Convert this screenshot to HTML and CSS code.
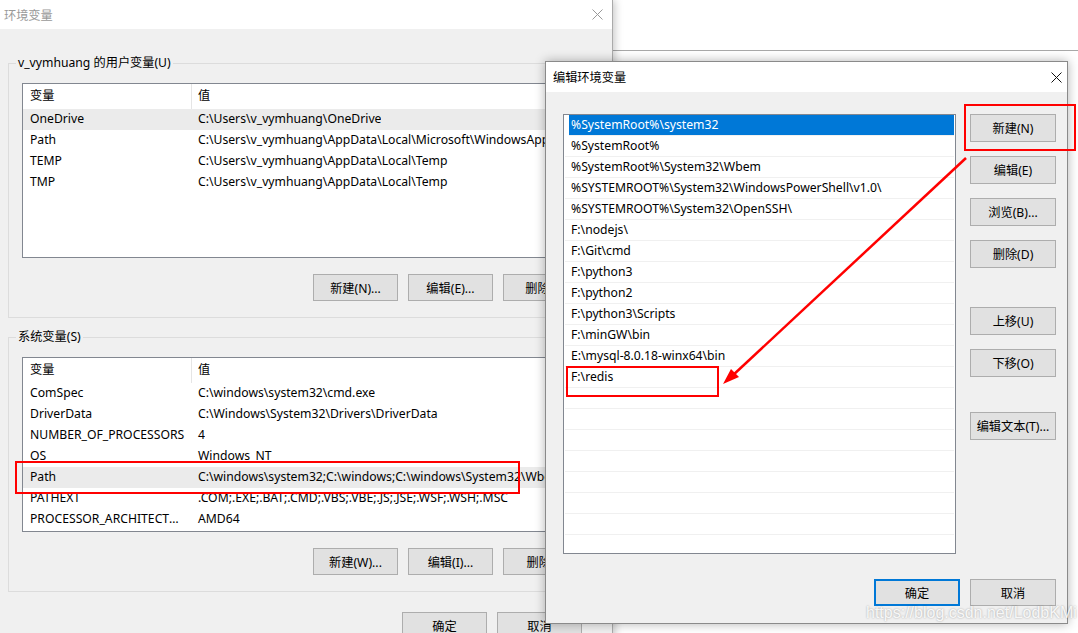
FILE: index.html
```html
<!DOCTYPE html>
<html lang="zh-CN">
<head>
    <meta charset="UTF-8">
    <title>环境变量</title>
    <link rel="stylesheet" href="styles.css">
</head>
<body>
    <div class="desktop">
        <!-- janela de fundo (propriedades do sistema) -->
        <div class="win win-sys"></div>

        <!-- 环境变量 -->
        <div class="win win-env">
            <div class="titlebar inactive">
                <span class="title">环境变量</span>
                <svg class="close" width="11" height="11" viewBox="0 0 11 11"><path d="M0.5 0.5L10.5 10.5M10.5 0.5L0.5 10.5"/></svg>
            </div>
            <div class="win-body">
                <fieldset class="group">
                    <legend>v_vymhuang 的用户变量(U)</legend>
                    <div class="listview">
                        <div class="lv-head"><span class="c1">变量</span><span class="c2">值</span></div>
                        <div class="lv-row sel"><span class="c1">OneDrive</span><span class="c2">C:\Users\v_vymhuang\OneDrive</span></div>
                        <div class="lv-row"><span class="c1">Path</span><span class="c2">C:\Users\v_vymhuang\AppData\Local\Microsoft\WindowsApps;</span></div>
                        <div class="lv-row"><span class="c1">TEMP</span><span class="c2">C:\Users\v_vymhuang\AppData\Local\Temp</span></div>
                        <div class="lv-row"><span class="c1">TMP</span><span class="c2">C:\Users\v_vymhuang\AppData\Local\Temp</span></div>
                    </div>
                    <div class="btn-row">
                        <button class="btn">新建(N)...</button>
                        <button class="btn">编辑(E)...</button>
                        <button class="btn">删除(D)</button>
                    </div>
                </fieldset>

                <fieldset class="group group-sys">
                    <legend>系统变量(S)</legend>
                    <div class="listview">
                        <div class="lv-head"><span class="c1">变量</span><span class="c2">值</span></div>
                        <div class="lv-row"><span class="c1">ComSpec</span><span class="c2">C:\windows\system32\cmd.exe</span></div>
                        <div class="lv-row"><span class="c1">DriverData</span><span class="c2">C:\Windows\System32\Drivers\DriverData</span></div>
                        <div class="lv-row"><span class="c1">NUMBER_OF_PROCESSORS</span><span class="c2">4</span></div>
                        <div class="lv-row"><span class="c1">OS</span><span class="c2">Windows_NT</span></div>
                        <div class="lv-row sel"><span class="c1">Path</span><span class="c2">C:\windows\system32;C:\windows;C:\windows\System32\Wbem;C:\windows</span></div>
                        <div class="lv-row"><span class="c1">PATHEXT</span><span class="c2">.COM;.EXE;.BAT;.CMD;.VBS;.VBE;.JS;.JSE;.WSF;.WSH;.MSC</span></div>
                        <div class="lv-row"><span class="c1 cut">PROCESSOR_ARCHITECTURE</span><span class="c2">AMD64</span></div>
                    </div>
                    <div class="btn-row">
                        <button class="btn">新建(W)...</button>
                        <button class="btn">编辑(I)...</button>
                        <button class="btn">删除(L)</button>
                    </div>
                </fieldset>

                <div class="dlg-foot env-foot">
                    <button class="btn">确定</button>
                    <button class="btn">取消</button>
                </div>
            </div>
        </div>

        <!-- 编辑环境变量 -->
        <div class="win win-edit">
            <div class="titlebar">
                <span class="title">编辑环境变量</span>
                <svg class="close" width="11" height="11" viewBox="0 0 11 11"><path d="M0.5 0.5L10.5 10.5M10.5 0.5L0.5 10.5"/></svg>
            </div>
            <div class="win-body edit-body">
                <div class="edit-main">
                    <div class="pathlist">
                        <div class="pl-row sel">%SystemRoot%\system32</div>
                        <div class="pl-row">%SystemRoot%</div>
                        <div class="pl-row">%SystemRoot%\System32\Wbem</div>
                        <div class="pl-row">%SYSTEMROOT%\System32\WindowsPowerShell\v1.0\</div>
                        <div class="pl-row">%SYSTEMROOT%\System32\OpenSSH\</div>
                        <div class="pl-row">F:\nodejs\</div>
                        <div class="pl-row">F:\Git\cmd</div>
                        <div class="pl-row">F:\python3</div>
                        <div class="pl-row">F:\python2</div>
                        <div class="pl-row">F:\python3\Scripts</div>
                        <div class="pl-row">F:\minGW\bin</div>
                        <div class="pl-row">E:\mysql-8.0.18-winx64\bin</div>
                        <div class="pl-row">F:\redis</div>
                        <div class="pl-row"></div>
                        <div class="pl-row"></div>
                        <div class="pl-row"></div>
                        <div class="pl-row"></div>
                        <div class="pl-row"></div>
                        <div class="pl-row"></div>
                        <div class="pl-row"></div>
                        <div class="pl-row"></div>
                    </div>
                    <div class="btn-col">
                        <button class="btn btn-wide">新建(N)</button>
                        <button class="btn btn-wide">编辑(E)</button>
                        <button class="btn btn-wide">浏览(B)...</button>
                        <button class="btn btn-wide">删除(D)</button>
                        <button class="btn btn-wide gap-up">上移(U)</button>
                        <button class="btn btn-wide">下移(O)</button>
                        <button class="btn btn-wide gap-text">编辑文本(T)...</button>
                    </div>
                </div>
                <div class="dlg-foot">
                    <button class="btn btn-wide btn-default">确定</button>
                    <button class="btn btn-wide">取消</button>
                </div>
            </div>
        </div>

        <!-- marcações vermelhas -->
        <div class="mark mark-new"></div>
        <div class="mark mark-redis"></div>
        <div class="mark mark-path"></div>
        <svg class="arrow" width="1078" height="633" viewBox="0 0 1078 633">
            <line x1="966" y1="158" x2="731" y2="377" />
            <polygon points="723,384 739,377 731,369" />
        </svg>

        <div class="watermark">https://blog.csdn.net/LodbKMi</div>
    </div>
</body>
</html>
```

FILE: styles.css
```css
* {
    margin: 0;
    padding: 0;
    box-sizing: border-box;
}

body {
    background: #fff;
    font-family: 'Noto Sans', 'Noto Sans CJK SC', sans-serif;
    font-size: 12.2px;
    color: #000;
    overflow: hidden;
}

.desktop {
    position: relative;
    width: 1078px;
    height: 633px;
    overflow: hidden;
}

.win {
    position: absolute;
    background: #f0f0f0;
}

.win-sys {
    left: 300px;
    top: 50px;
    width: 800px;
    height: 620px;
    background: #fff;
    border-top: 1px solid #a8a8a8;
}

.win-env {
    left: 0;
    top: 0;
    width: 613px;
    height: 660px;
    border-right: 1px solid #aaa;
    box-shadow: 2px 0 8px rgba(0,0,0,0.22);
}

.win-edit {
    left: 545px;
    top: 61px;
    width: 523px;
    height: 563px;
    border: 1px solid #8a8a8a;
    box-shadow: 0 0 10px rgba(0,0,0,0.3);
}

.titlebar {
    background: #fff;
    display: flex;
    align-items: center;
    justify-content: space-between;
}

.win-env .titlebar {
    height: 29px;
    padding: 0 9px 0 4px;
}

.win-edit .titlebar {
    height: 30px;
    padding: 0 5px 0 7px;
}

.titlebar.inactive .title {
    color: #999;
}

.close {
    fill: none;
    stroke: #111;
    stroke-width: 1;
}

.titlebar.inactive .close {
    stroke: #999;
}

.win-env .win-body {
    padding: 0 8px;
}

/* grupos */
.group {
    min-width: 0;
    border: 1px solid #dcdcdc;
    margin-top: 26px;
    padding: 12px 15px 16px 13px;
}

.group-sys {
    margin-top: 11px;
}

.group legend {
    line-height: 16px;
    padding: 0 2px;
    margin-left: -6px;
}

.listview {
    height: 175px;
    background: #fff;
    border: 1px solid #828790;
    overflow: hidden;
}

.lv-head,
.lv-row {
    display: flex;
    white-space: nowrap;
}

.lv-head {
    height: 25px;
    line-height: 24px;
}

.lv-row {
    height: 21px;
    line-height: 20px;
}

.lv-row.sel {
    background: #ebebeb;
}

.c1 {
    flex: 0 0 169px;
    padding-left: 7px;
    overflow: hidden;
}

.lv-head .c1 {
    border-right: 1px solid #e5e5e5;
}

.c1.cut {
    text-overflow: ellipsis;
    padding-right: 8px;
}

.c2 {
    padding-left: 6px;
    overflow: hidden;
}

.btn-row {
    display: flex;
    justify-content: flex-end;
    gap: 10px;
    margin-top: 16px;
}

.btn {
    width: 85px;
    height: 27px;
    background: #e1e1e1;
    border: 1px solid #adadad;
    font: inherit;
    color: #000;
}

.dlg-foot {
    display: flex;
    justify-content: flex-end;
    gap: 10px;
}

.env-foot {
    margin-top: 20px;
    margin-right: 22px;
}

/* editar */
.edit-body {
    padding: 22px 11px 17px 17px;
}

.edit-main {
    display: flex;
    gap: 14px;
    height: 440px;
    margin-bottom: 25px;
}

.pathlist {
    width: 393px;
    background: #fff;
    border: 1px solid #828790;
    overflow: hidden;
}

.pl-row {
    height: 21px;
    line-height: 19px;
    margin: 0 1px;
    padding-left: 6px;
    border-bottom: 1px solid #f0f0f0;
    white-space: nowrap;
}

.pl-row.sel {
    margin-left: 5px;
    padding-left: 2px;
    background: #0078d7;
    color: #fff;
}

.btn-col {
    display: flex;
    flex-direction: column;
    gap: 14px;
}

.btn-wide {
    width: 86px;
    height: 28px;
}

.dlg-foot .btn-wide {
    height: 27px;
}

.gap-up {
    margin-top: 25px;
}

.gap-text {
    margin-top: 21px;
}

.btn-default {
    border: 2px solid #0078d7;
}

/* marcações */
.mark {
    position: absolute;
    border: 2px solid #f00;
}

.mark-new {
    left: 964px;
    top: 104px;
    width: 112px;
    height: 47px;
}

.mark-redis {
    left: 566px;
    top: 366px;
    width: 153px;
    height: 31px;
}

.mark-path {
    left: 15px;
    top: 461px;
    width: 505px;
    height: 33px;
}

.arrow {
    position: absolute;
    left: 0;
    top: 0;
}

.arrow line {
    stroke: #f00;
    stroke-width: 2.5;
}

.arrow polygon {
    fill: #f00;
}

.watermark {
    position: absolute;
    left: 866px;
    top: 604px;
    font-family: 'Liberation Sans', sans-serif;
    font-size: 16px;
    color: rgba(255,255,255,0.9);
    text-shadow: 0 0 2px rgba(0,0,0,0.35);
}
```
